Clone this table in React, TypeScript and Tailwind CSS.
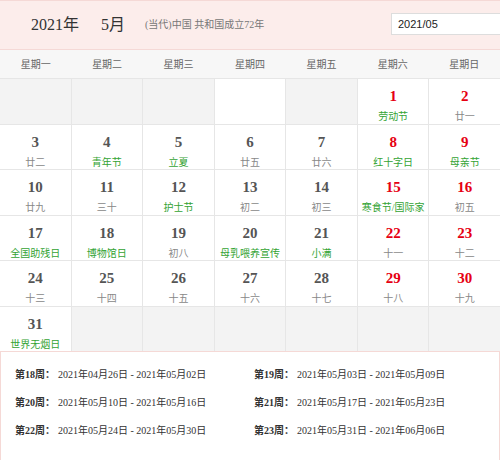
const serif = "font-['Liberation_Serif','Noto_Sans_CJK_SC',serif]";

type Cell = { day?: number; lunar?: string; fest?: boolean; red?: boolean; blank?: boolean };

const weekNames = ["星期一", "星期二", "星期三", "星期四", "星期五", "星期六", "星期日"];

const cells: Cell[] = [
  {},
  {},
  {},
  { blank: true },
  {},
  { day: 1, lunar: "劳动节", fest: true, red: true },
  { day: 2, lunar: "廿一", red: true },
  { day: 3, lunar: "廿二" },
  { day: 4, lunar: "青年节", fest: true },
  { day: 5, lunar: "立夏", fest: true },
  { day: 6, lunar: "廿五" },
  { day: 7, lunar: "廿六" },
  { day: 8, lunar: "红十字日", fest: true, red: true },
  { day: 9, lunar: "母亲节", fest: true, red: true },
  { day: 10, lunar: "廿九" },
  { day: 11, lunar: "三十" },
  { day: 12, lunar: "护士节", fest: true },
  { day: 13, lunar: "初二" },
  { day: 14, lunar: "初三" },
  { day: 15, lunar: "寒食节/国际家", fest: true, red: true },
  { day: 16, lunar: "初五", red: true },
  { day: 17, lunar: "全国助残日", fest: true },
  { day: 18, lunar: "博物馆日", fest: true },
  { day: 19, lunar: "初八" },
  { day: 20, lunar: "母乳喂养宣传", fest: true },
  { day: 21, lunar: "小满", fest: true },
  { day: 22, lunar: "十一", red: true },
  { day: 23, lunar: "十二", red: true },
  { day: 24, lunar: "十三" },
  { day: 25, lunar: "十四" },
  { day: 26, lunar: "十五" },
  { day: 27, lunar: "十六" },
  { day: 28, lunar: "十七" },
  { day: 29, lunar: "十八", red: true },
  { day: 30, lunar: "十九", red: true },
  { day: 31, lunar: "世界无烟日", fest: true },
  {},
  {},
  {},
  {},
  {},
  {},
];

const weeks = [
  ["第18周：", "2021年04月26日 - 2021年05月02日"],
  ["第19周：", "2021年05月03日 - 2021年05月09日"],
  ["第20周：", "2021年05月10日 - 2021年05月16日"],
  ["第21周：", "2021年05月17日 - 2021年05月23日"],
  ["第22周：", "2021年05月24日 - 2021年05月30日"],
  ["第23周：", "2021年05月31日 - 2021年06月06日"],
];

function DayCell({ c }: { c: Cell }) {
  if (c.day === undefined) {
    return <div className={c.blank ? "bg-white" : "bg-[#f3f3f3]"} />;
  }
  return (
    <div className="bg-white flex flex-col items-center pt-[8px]">
      <span className={`text-[15px] leading-[18px] font-bold ${c.red ? "text-[#e60012]" : "text-[#555]"}`}>
        {c.day}
      </span>
      <span
        className={`mt-[5px] text-[10px] leading-[13px] whitespace-nowrap ${c.fest ? "text-[#33a333]" : "text-[#888]"}`}
      >
        {c.lunar}
      </span>
    </div>
  );
}

export default function App() {
  return (
    <div className={`w-[500px] h-[460px] overflow-hidden bg-white ${serif}`}>
      <div className="h-[50px] bg-[#fcedeb] border-t border-b border-[#f5d9d6] flex items-center">
        <span className="ml-[31px] text-[16px] text-[#333]">2021年</span>
        <span className="ml-[22px] text-[16px] text-[#333]">5月</span>
        <span className="ml-[20px] text-[10px] text-[#777] mb-[2px]">(当代)中国 共和国成立72年</span>
        <div className="ml-auto w-[120px] mr-[-11px] h-[22px] bg-white border border-[#ddd] flex items-center pl-[6px] text-[11px] text-[#222] font-['Liberation_Sans',sans-serif] mb-[2px]">
          2021/05
        </div>
      </div>
      <div className="h-[28px] bg-[#f7f7f7] grid grid-cols-7 items-center text-[10px] text-[#666]">
        {weekNames.map((w) => (
          <div key={w} className="text-center">
            {w}
          </div>
        ))}
      </div>
      <div className="grid grid-cols-7 auto-rows-[44.5px] gap-px bg-[#e6e6e6] border-t border-[#e6e6e6]">
        {cells.map((c, i) => (
          <DayCell key={i} c={c} />
        ))}
      </div>
      <div className="border border-[#f5d9d6] h-[110px] grid grid-cols-2 content-start pt-[15px] gap-y-[12px] text-[10px] leading-[16px] text-[#333]">
        {weeks.map(([label, range], i) => (
          <div key={label} className={`whitespace-nowrap ${i % 2 === 0 ? "pl-[14px]" : "pl-[4px]"}`}>
            <span className="font-bold">{label}</span>
            <span className="ml-[3px]">{range}</span>
          </div>
        ))}
      </div>
    </div>
  );
}
